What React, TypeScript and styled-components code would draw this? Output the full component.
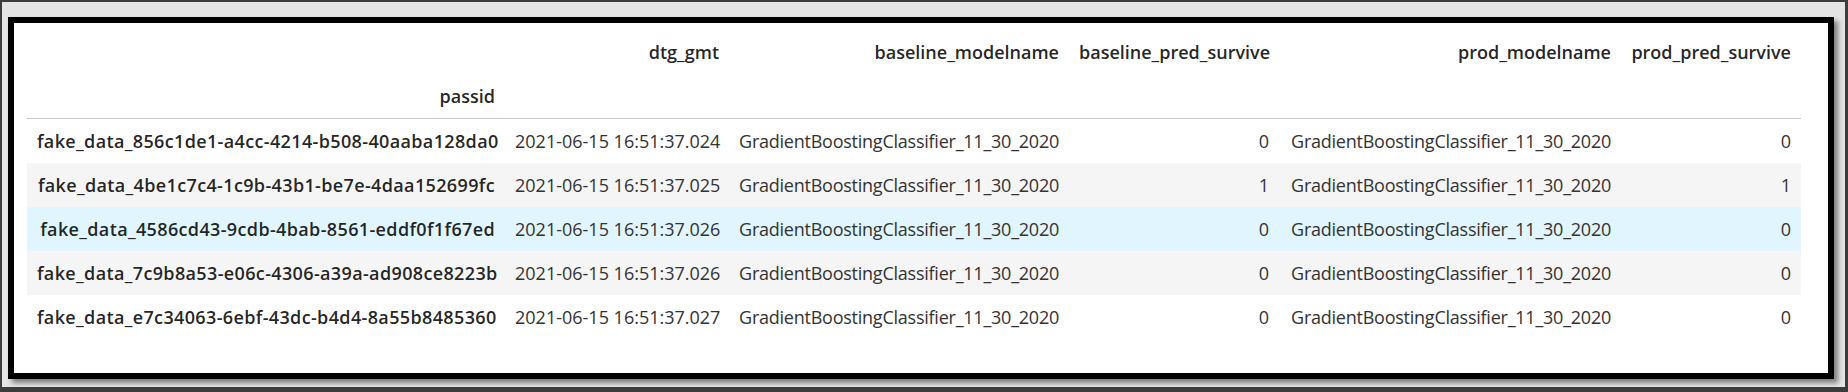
import React from "react";
import styled, { createGlobalStyle } from "styled-components";

const GlobalStyle = createGlobalStyle`
  html, body {
    margin: 0;
    padding: 0;
    background: #3c3c3c;
  }
`;

const Screen = styled.div`
  box-sizing: border-box;
  width: 1848px;
  height: 392px;
  background: #e4e4e4;
  border-style: solid;
  border-color: #3c3c3c;
  border-width: 2px 3px 5px 2px;
  padding: 15px 0 0 6px;
`;

const Card = styled.div`
  box-sizing: border-box;
  width: 1826px;
  height: 362px;
  background: #ffffff;
  border: 6px solid #000000;
  box-shadow: 4px 4px 5px rgba(0, 0, 0, 0.45);
  padding: 7px 0 0 13px;
  overflow: hidden;
`;

const DataTable = styled.table`
  width: 1774px;
  border-collapse: collapse;
  border-spacing: 0;
  table-layout: fixed;
  font-family: "Open Sans", "Noto Sans", sans-serif;
  font-size: 18px;
  color: rgba(0, 0, 0, 0.87);
`;

const Head = styled.thead`
  border-bottom: 1.5px solid #c4c4c4;
`;

const HeadCell = styled.th`
  text-align: right;
  vertical-align: middle;
  font-weight: 600;
  padding: 9px 10px;
  line-height: 26px;
  white-space: nowrap;
`;

const Row = styled.tr<{ tone: "plain" | "stripe" | "hover" }>`
  background: ${({ tone }) =>
    tone === "stripe" ? "#f5f5f5" : tone === "hover" ? "#e1f5fe" : "#ffffff"};
`;

const IndexCell = styled.th`
  text-align: right;
  font-weight: 600;
  padding: 9px 10px;
  line-height: 26px;
  white-space: nowrap;
  letter-spacing: 0.36px;
`;

const Cell = styled.td<{ tight?: boolean }>`
  text-align: right;
  padding: 9px 10px;
  line-height: 26px;
  white-space: nowrap;
  color: #333333;
  letter-spacing: ${({ tight }) => (tight ? "-0.24px" : "0")};
`;

const columns = [
  "dtg_gmt",
  "baseline_modelname",
  "baseline_pred_survive",
  "prod_modelname",
  "prod_pred_survive",
];

const widths = [478, 224, 340, 210, 342, 180];

const model = "GradientBoostingClassifier_11_30_2020";

const rows = [
  ["fake_data_856c1de1-a4cc-4214-b508-40aaba128da0", "2021-06-15 16:51:37.024", 0, 0],
  ["fake_data_4be1c7c4-1c9b-43b1-be7e-4daa152699fc", "2021-06-15 16:51:37.025", 1, 1],
  ["fake_data_4586cd43-9cdb-4bab-8561-eddf0f1f67ed", "2021-06-15 16:51:37.026", 0, 0],
  ["fake_data_7c9b8a53-e06c-4306-a39a-ad908ce8223b", "2021-06-15 16:51:37.026", 0, 0],
  ["fake_data_e7c34063-6ebf-43dc-b4d4-8a55b8485360", "2021-06-15 16:51:37.027", 0, 0],
] as const;

const toneFor = (i: number) => (i === 2 ? "hover" : i % 2 === 1 ? "stripe" : "plain");

const App: React.FC = () => (
  <>
    <GlobalStyle />
    <Screen>
      <Card>
        <DataTable>
          <colgroup>
            {widths.map((w, i) => (
              <col key={i} style={{ width: w }} />
            ))}
          </colgroup>
          <Head>
            <tr>
              <HeadCell />
              {columns.map((c) => (
                <HeadCell key={c}>{c}</HeadCell>
              ))}
            </tr>
            <tr>
              <HeadCell>passid</HeadCell>
              {columns.map((c) => (
                <HeadCell key={c} />
              ))}
            </tr>
          </Head>
          <tbody>
            {rows.map(([id, dtg, base, prod], i) => (
              <Row key={id} tone={toneFor(i)}>
                <IndexCell>{id}</IndexCell>
                <Cell>{dtg}</Cell>
                <Cell tight>{model}</Cell>
                <Cell>{base}</Cell>
                <Cell tight>{model}</Cell>
                <Cell>{prod}</Cell>
              </Row>
            ))}
          </tbody>
        </DataTable>
      </Card>
    </Screen>
  </>
);

export default App;
